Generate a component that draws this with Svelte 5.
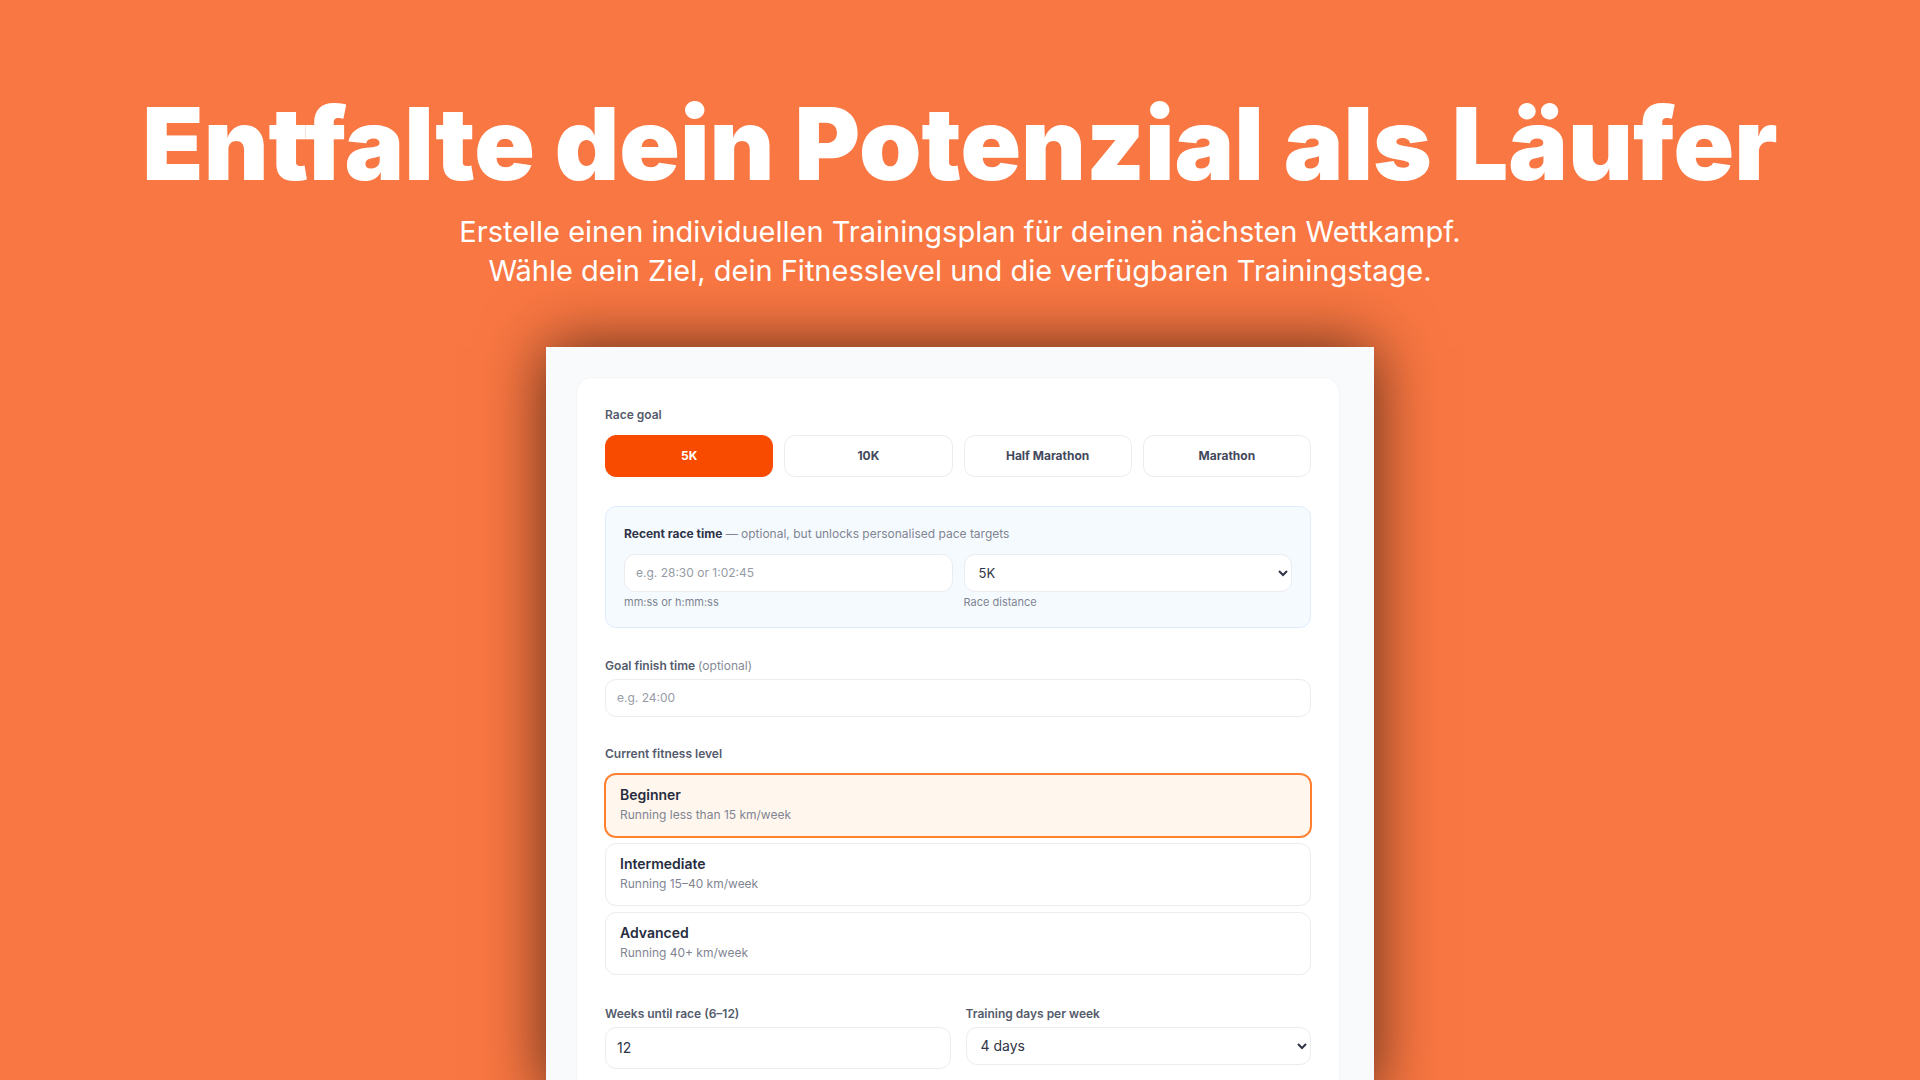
<script>
  const races = ['5K', '10K', 'Half Marathon', 'Marathon'];
  const levels = [
    { id: 'beginner', name: 'Beginner', desc: 'Running less than 15 km/week' },
    { id: 'intermediate', name: 'Intermediate', desc: 'Running 15–40 km/week' },
    { id: 'advanced', name: 'Advanced', desc: 'Running 40+ km/week' }
  ];

  let goal = '5K';
  let recentTime = '';
  let recentDistance = '5K';
  let goalTime = '';
  let level = 'beginner';
  let weeks = '12';
  let days = 4;

  $: weeks = weeks.replace(/[^0-9]/g, '').slice(0, 2);
</script>

<main class="hero">
  <header class="intro">
    <h1>Entfalte dein Potenzial als Läufer</h1>
    <p>Erstelle einen individuellen Trainingsplan für deinen nächsten Wettkampf.<br />Wähle dein Ziel, dein Fitnesslevel und die verfügbaren Trainingstage.</p>
  </header>

  <div class="panel">
    <form class="card" on:submit|preventDefault>
      <div class="group" role="group" aria-labelledby="race-goal">
        <div class="label" id="race-goal">Race goal</div>
        <div class="races">
          {#each races as race}
            <button type="button" class="race" class:active={goal === race} aria-pressed={goal === race} on:click={() => (goal = race)}>{race}</button>
          {/each}
        </div>
      </div>

      <div class="recent">
        <p class="recent-title"><strong>Recent race time</strong> — optional, but unlocks personalised pace targets</p>
        <div class="recent-row">
          <div class="field">
            <input id="recent-time" type="text" bind:value={recentTime} placeholder="e.g. 28:30 or 1:02:45" />
            <label class="hint" for="recent-time">mm:ss or h:mm:ss</label>
          </div>
          <div class="field">
            <select id="recent-distance" bind:value={recentDistance}>
              {#each races as race}
                <option>{race}</option>
              {/each}
            </select>
            <label class="hint" for="recent-distance">Race distance</label>
          </div>
        </div>
      </div>

      <div class="field">
        <label class="label" for="goal-time">Goal finish time <span class="optional">(optional)</span></label>
        <input id="goal-time" type="text" bind:value={goalTime} placeholder="e.g. 24:00" />
      </div>

      <div class="group" role="group" aria-labelledby="fitness-level">
        <div class="label" id="fitness-level">Current fitness level</div>
        <div class="levels">
          {#each levels as l}
            <button type="button" class="level" class:active={level === l.id} aria-pressed={level === l.id} on:click={() => (level = l.id)}>
              <span class="level-name">{l.name}</span>
              <span class="level-desc">{l.desc}</span>
            </button>
          {/each}
        </div>
      </div>

      <div class="schedule">
        <div class="field">
          <label class="label" for="weeks">Weeks until race (6–12)</label>
          <input id="weeks" class="large" type="text" inputmode="numeric" bind:value={weeks} />
        </div>
        <div class="field">
          <label class="label" for="days">Training days per week</label>
          <select id="days" class="large" bind:value={days}>
            {#each [3, 4, 5, 6] as n}
              <option value={n}>{n} days</option>
            {/each}
          </select>
        </div>
      </div>
    </form>
  </div>
</main>

<style>
  :global(body) { background: #f97742; }

  .hero { height: 100vh; overflow: hidden; box-sizing: border-box; padding-top: 88px; display: flex; flex-direction: column; align-items: center; font-family: Inter, 'Liberation Sans', sans-serif; background: #f97742; }
  .intro { text-align: center; color: #ffffff; margin-bottom: 57px; }
  h1 { margin: 0; font-size: 100px; line-height: 112px; font-weight: 900; }
  .intro p { margin: 12px 0 0; font-size: 29px; line-height: 39px; font-weight: 400; }

  .panel { flex: 1 0 auto; width: 100%; max-width: 828px; box-sizing: border-box; padding: 30px 34px 0 30px; background: #f9fafc; box-shadow: 0 0 60px rgba(0, 0, 0, 0.65); display: flex; }
  .card { flex: 1; min-width: 0; box-sizing: border-box; padding: 28px; background: #ffffff; border: 1px solid #f4f5f8; border-bottom: none; border-radius: 16px 16px 0 0; color: #2f3447; }

  .label { display: block; font-size: 12px; line-height: 18px; font-weight: 600; color: #555b6c; }
  .group .label { margin-bottom: 11px; }
  .field { display: flex; flex-direction: column; min-width: 0; }
  .field .label { margin-bottom: 4px; }
  .optional { font-weight: 400; color: #858a96; }

  .races { display: grid; grid-template-columns: repeat(4, 1fr); gap: 11px; }
  button { font-family: inherit; cursor: pointer; background: #ffffff; border: 1px solid #ebecf1; border-radius: 11px; }
  .race { height: 42px; padding: 0 0 2px; font-size: 12px; font-weight: 700; color: #43495c; }
  .race.active { background: #f84b00; border-color: #f84b00; color: #ffffff; }

  .recent { margin: 29px 0; padding: 18px; background: #f5faff; border: 1px solid #e0edfd; border-radius: 11px; }
  .recent-title { margin: 0 0 11px; font-size: 12px; line-height: 18px; color: #7f8592; }
  .recent-title strong { font-weight: 700; color: #2f3447; }
  .recent-row { display: grid; grid-template-columns: 1fr 1fr; gap: 11px; }
  .hint { margin-top: 3px; font-size: 11px; line-height: 14px; color: #7f8592; }

  input, select { width: 100%; height: 38px; box-sizing: border-box; border: 1px solid #ebecf1; border-radius: 11px; font-family: inherit; font-size: 12px; color: #2f3447; background: #ffffff; outline: none; }
  input { padding: 0 11px 2px; }
  select { padding: 0 0 1px 10px; font-size: 13px; }
  input::placeholder { color: #969ba6; opacity: 1; }
  input:focus, select:focus { border-color: #ff7f2e; }
  .large { font-size: 14px; }
  input.large { height: 42px; }

  .field + .group { margin: 28px 0 30px; }
  .levels { display: flex; flex-direction: column; gap: 6px; }
  .level { height: 63px; padding: 0 14px 1px; display: flex; flex-direction: column; justify-content: center; text-align: left; }
  .level.active { background: #fff6ed; border-color: #ff7f2e; box-shadow: 0 0 0 1px #ff7f2e; }
  .level-name { font-size: 14px; line-height: 20px; font-weight: 600; color: #272c40; }
  .level-desc { font-size: 12px; line-height: 20px; font-weight: 400; color: #7f8592; }

  .schedule { display: grid; grid-template-columns: 1fr 1fr; gap: 15px; }
</style>
